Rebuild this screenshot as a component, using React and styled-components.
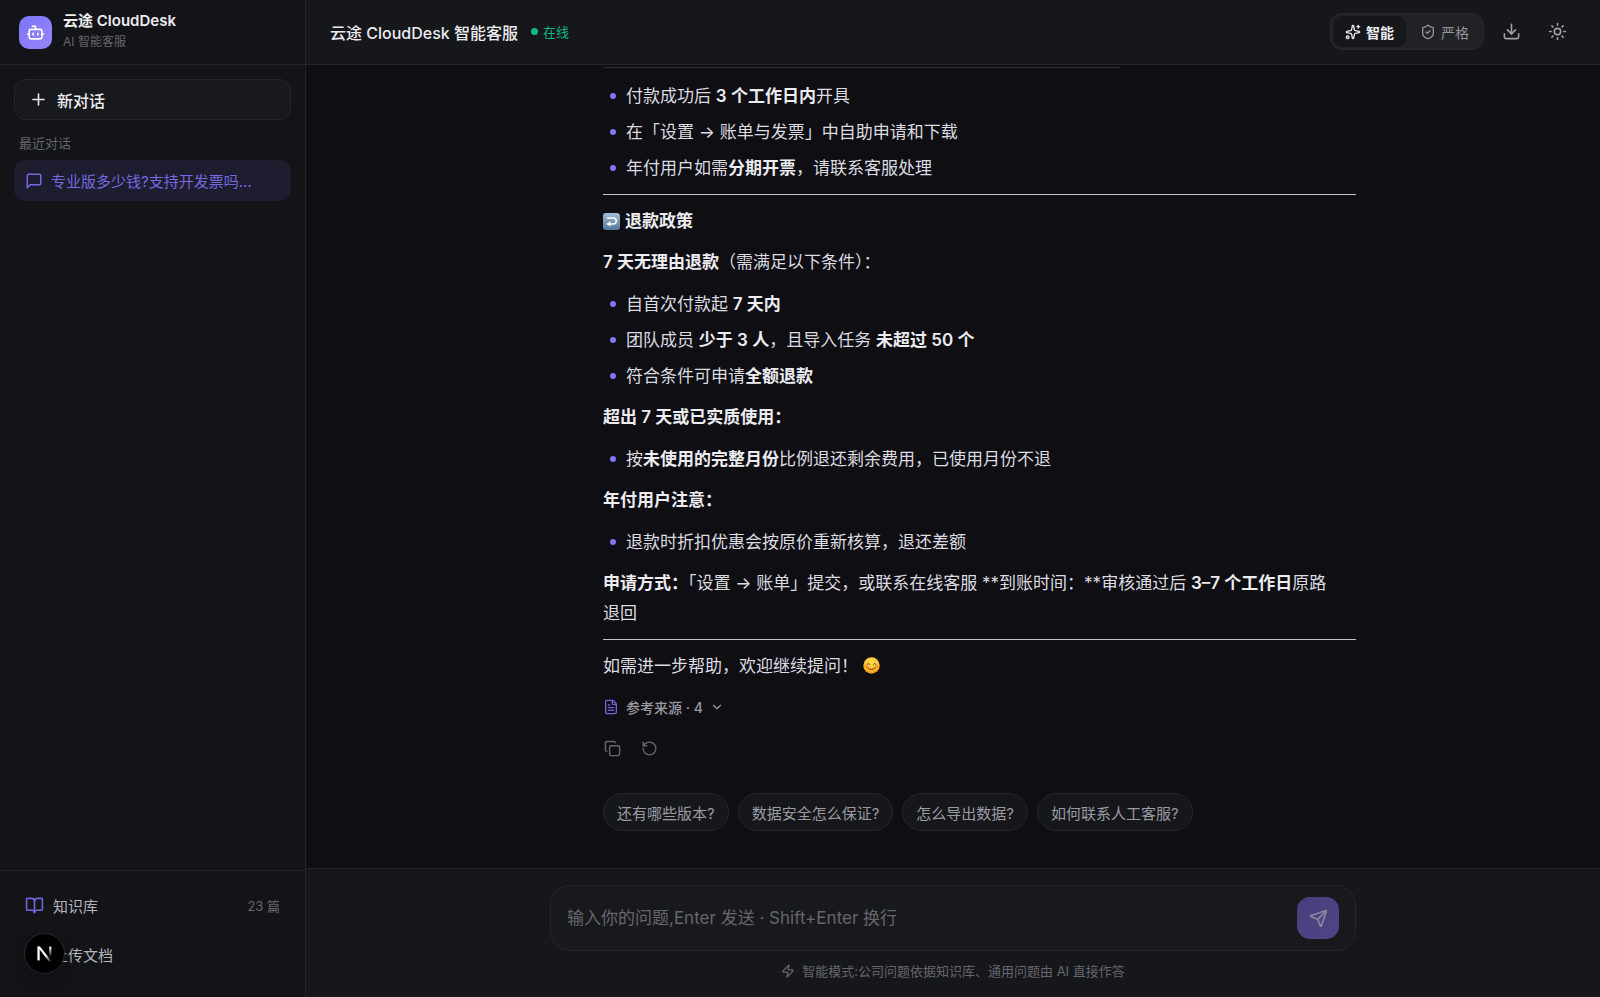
import { useState } from "react";
import styled, { createGlobalStyle } from "styled-components";
import {
    BookOpen, Bot, ChevronDown, Copy, Download, FileText, Plus,
    RotateCcw, Send, ShieldCheck, Sparkles, Sun, Upload, Zap,
} from "lucide-react";

const GlobalStyle = createGlobalStyle`
    * { box-sizing: border-box; }
    body {
        margin: 0;  background-color: #0e0e13;  color: #e4e4e8;
        font-family: Inter, "Noto Sans CJK SC", sans-serif;
        font-size: 16px;
    }
    button, textarea { font: inherit;  color: inherit; }
    button {
        padding: 0;  border: none;  background: none;  cursor: pointer;
        display: flex;  align-items: center;
    }
    svg { flex-shrink: 0; }
`

const Layout = styled.div`
    height: 100vh;
    display: grid;  grid-template-columns: 306px minmax(0, 1fr);
`

const Sidebar = styled.aside`
    display: flex;  flex-direction: column;  min-height: 0;
    background-color: #131418;
    border-right: 1px solid #24252a;
`

const Brand = styled.div`
    height: 65px;  padding: 0 19px;
    display: flex;  align-items: center;  column-gap: 11px;
    border-bottom: 1px solid #24252a;
`

const BrandText = styled.div`
    padding-bottom: 2px;
`

const Logo = styled.div`
    width: 33px;  height: 33px;  border-radius: 10px;
    display: flex;  align-items: center;  justify-content: center;
    background: linear-gradient(135deg, #7c74f8, #9686fb);
    color: #fff;
`

const BrandName = styled.div`
    font-size: 15px;  font-weight: 600;  line-height: 22px;  color: #ececf1;
`

const BrandSub = styled.div`
    font-size: 12px;  line-height: 20px;  color: #65666f;
`

const SidebarBody = styled.div`
    flex: 1;  padding: 14px;
    display: flex;  flex-direction: column;
`

const NewChat = styled.button`
    height: 41px;  padding: 0 14px;  column-gap: 9px;
    border: 1px solid #26272c;  border-radius: 12px;
    background-color: #18191d;
    font-weight: 500;  color: #ececf1;
`

const GroupLabel = styled.h2`
    margin: 13px 5px 7px;
    font-size: 13px;  font-weight: 400;  line-height: 20px;  color: #65666f;
`

const ChatItem = styled.button`
    height: 41px;  padding: 0 11px;  column-gap: 8px;
    border-radius: 12px;
    background-color: #1e1d2f;  color: #7669e0;
    font-size: 15px;
`

const SidebarFooter = styled.div`
    height: 127px;  padding: 13px 14px 18px;
    display: flex;  flex-direction: column;  row-gap: 6px;
    border-top: 1px solid #24252a;
`

const FooterItem = styled.button`
    height: 43px;  padding: 0 11px;  column-gap: 9px;
    font-size: 15px;  color: #b4b4bc;
    svg { color: #7265dc; }
`

const Count = styled.span`
    margin-left: auto;
    font-size: 13px;  color: #65666f;
`

const DevBadge = styled.button`
    position: fixed;  left: 24px;  bottom: 23px;
    width: 41px;  height: 41px;  border-radius: 50%;
    justify-content: center;
    background-color: #000;  border: 1px solid #2a2a2c;
    box-shadow: 0 8px 16px rgba(0,0,0,0.16);
`

const Main = styled.main`
    display: flex;  flex-direction: column;  min-height: 0;
`

const Header = styled.header`
    height: 65px;  padding: 0 24px 1px;  flex-shrink: 0;
    display: flex;  align-items: center;
    background-color: #16171b;
    border-bottom: 1px solid #24252a;
`

const Title = styled.h1`
    margin: 0;
    font-size: 16px;  font-weight: 500;  color: #ececf1;
`

const Status = styled.span`
    margin-left: 13px;
    display: flex;  align-items: center;  column-gap: 5px;
    font-size: 13px;  color: #10b981;
    &::before {
        content: "";  width: 7px;  height: 7px;
        border-radius: 50%;  background-color: #10b981;
    }
`

const Tools = styled.div`
    margin-left: auto;
    display: flex;  align-items: center;  column-gap: 9px;
`

const ModeSwitch = styled.div`
    padding: 2px;
    display: flex;  column-gap: 2px;
    border: 1px solid #28292d;  border-radius: 12px;
    background-color: #212226;
`

const ModeButton = styled.button`
    height: 31px;  padding: 0 12px;  column-gap: 5px;
    border-radius: 9px;
    font-size: 14px;  font-weight: ${props => props.$active ? 600 : 400};
    background-color: ${props => props.$active ? "#16171b" : "transparent"};
    color: ${props => props.$active ? "#ececf1" : "#93949c"};
`

const IconButton = styled.button`
    width: ${props => props.$size};  height: ${props => props.$size};
    justify-content: center;
    color: ${props => props.$color};
`

/* column-reverse keeps the newest message in view */
const Scroller = styled.div`
    flex: 1;  min-height: 0;  overflow-y: auto;  scrollbar-width: none;
    padding: 0 24px 37px;
    display: flex;  flex-direction: column-reverse;
`

const Thread = styled.div`
    width: 100%;  max-width: 806px;  margin: 0 auto;
    padding-left: 53px;
`

const Answer = styled.article`
    font-size: 17px;  line-height: 30px;  color: #dcdce1;

    p { margin: 11px 0; }
    h3 {
        margin: 11px 0;
        display: flex;  align-items: center;  column-gap: 5px;
        font-size: 17px;  font-weight: 600;  color: #ececf1;
    }
    strong { font-weight: 600;  color: #ececf1; }
    ul { margin: 12px 0 11px;  padding-left: 23px;  list-style: none; }
    li + li { margin-top: 6px; }
    li::before {
        content: "";  display: inline-block;
        width: 6px;  height: 6px;  border-radius: 50%;
        margin: 0 10px 0 -16px;  vertical-align: 3px;
        background-color: #8078f5;
    }
    hr { margin: 11px 0;  border: none;  border-top: 1px solid #c2c2c6; }
`

const TableEnd = styled.div`
    width: 517px;  height: 20px;  max-width: 100%;  margin-bottom: 13px;
    border-bottom: 1px solid #2c2d31;
`

const Emoji = styled.svg`
    width: 17px;  height: 17px;  vertical-align: -2px;
`

const Sources = styled.button`
    height: 30px;  column-gap: 7px;
    font-size: 14px;  font-weight: 500;  color: #9a9ba3;
`

const Actions = styled.div`
    margin-top: 17px;
    display: flex;  column-gap: 19px;
`

const Suggestions = styled.div`
    margin-top: 36px;
    display: flex;  flex-wrap: wrap;  gap: 9px;
`

const Chip = styled.button`
    height: 38px;  padding: 0 13px;
    border: 1px solid #26272c;  border-radius: 19px;
    background-color: #16171b;
    font-size: 15px;  color: #9a9ba3;
`

const Composer = styled.form`
    flex-shrink: 0;  padding: 16px 24px;
    background-color: #16171b;
    border-top: 1px solid #24252a;
`

const InputBox = styled.div`
    max-width: 806px;  margin: 0 auto;  padding: 11px 16px;
    display: flex;  align-items: center;  column-gap: 12px;
    border: 1px solid #26272c;  border-radius: 20px;
    background-color: #18191d;
`

const Input = styled.textarea`
    flex: 1;  height: 26px;  padding: 0;
    border: none;  outline: none;  resize: none;  background: none;
    font-size: 17px;  line-height: 26px;
    &::placeholder { color: #65666f;  opacity: 1; }
`

const SendButton = styled.button`
    width: 42px;  height: 42px;  border-radius: 13px;
    justify-content: center;
    background: linear-gradient(135deg, #473f7d, #4e4585);
    color: #8b8a9c;
`

const Hint = styled.p`
    margin: 10px 0 0;
    display: flex;  align-items: center;  justify-content: center;  column-gap: 7px;
    font-size: 13px;  line-height: 20px;  color: #65666f;
`

function ReturnEmoji() {
    return (
        <Emoji viewBox="0 0 17 17" role="img" aria-label="↩️">
            <defs>
                <linearGradient id="tile" x1="0" y1="0" x2="0" y2="1">
                    <stop offset="0" stopColor="#9fbdd6" />
                    <stop offset="1" stopColor="#55799a" />
                </linearGradient>
            </defs>
            <rect width="17" height="17" rx="3" fill="url(#tile)" />
            <path d="M4.5 5h5.8a2.8 2.8 0 0 1 0 5.9H6.5" fill="none" stroke="#fff" strokeWidth="1.5" strokeLinecap="round" />
            <path d="M7.4 8.2v5.4L3.3 10.9z" fill="#fff" />
        </Emoji>
    )
}

function SmileEmoji() {
    return (
        <Emoji viewBox="0 0 17 17" role="img" aria-label="😊">
            <defs>
                <radialGradient id="face" cx="0.5" cy="0.3" r="0.7">
                    <stop offset="0" stopColor="#ffe251" />
                    <stop offset="0.7" stopColor="#fdb92b" />
                    <stop offset="1" stopColor="#ef8d1b" />
                </radialGradient>
            </defs>
            <circle cx="8.5" cy="8.5" r="8.2" fill="url(#face)" />
            <circle cx="3.6" cy="9.6" r="1.8" fill="#f5752f" opacity="0.5" />
            <circle cx="13.4" cy="9.6" r="1.8" fill="#f5752f" opacity="0.5" />
            <path d="M4.2 7.4q1.3-2.6 2.6 0M10.2 7.4q1.3-2.6 2.6 0M4.9 10.9q3.6 3.4 7.2 0" fill="none" stroke="#6b3a10" strokeWidth="1" strokeLinecap="round" />
        </Emoji>
    )
}

function MessageIcon() {
    return (
        <svg width="18" height="18" viewBox="0 0 24 24" fill="none" stroke="currentColor" strokeWidth="2" strokeLinecap="round" strokeLinejoin="round">
            <path d="M21 15a2 2 0 0 1-2 2H7l-4 4V5a2 2 0 0 1 2-2h14a2 2 0 0 1 2 2z" />
        </svg>
    )
}

function NextMark() {
    return (
        <svg width="41" height="41" viewBox="0 0 41 41" fill="none">
            <defs>
                <linearGradient id="stem" x1="0" y1="14" x2="0" y2="24" gradientUnits="userSpaceOnUse">
                    <stop stopColor="#fff" />
                    <stop offset="1" stopColor="#fff" stopOpacity="0" />
                </linearGradient>
                <linearGradient id="leg" x1="22" y1="22" x2="27" y2="29" gradientUnits="userSpaceOnUse">
                    <stop stopColor="#fff" />
                    <stop offset="1" stopColor="#fff" stopOpacity="0" />
                </linearGradient>
            </defs>
            <path d="M13.4 13.6h2.6L27.6 28.2l-2 1.2z" fill="url(#leg)" />
            <path d="M13.4 13.6h2.3v13.8h-2.3z" fill="#fff" />
            <path d="M25.2 13.6h2.2V25h-2.2z" fill="url(#stem)" />
        </svg>
    )
}

const suggestions = ["还有哪些版本?", "数据安全怎么保证?", "怎么导出数据?", "如何联系人工客服?"]

function SidebarComponent() {
    return (
        <Sidebar>
            <Brand>
                <Logo><Bot size={19} /></Logo>
                <BrandText>
                    <BrandName>云途 CloudDesk</BrandName>
                    <BrandSub>AI 智能客服</BrandSub>
                </BrandText>
            </Brand>
            <SidebarBody>
                <NewChat type="button"><Plus size={19} />新对话</NewChat>
                <GroupLabel>最近对话</GroupLabel>
                <ChatItem type="button"><MessageIcon />专业版多少钱?支持开发票吗…</ChatItem>
            </SidebarBody>
            <SidebarFooter>
                <FooterItem type="button"><BookOpen size={19} />知识库<Count>23 篇</Count></FooterItem>
                <FooterItem type="button"><Upload size={19} />上传文档</FooterItem>
            </SidebarFooter>
        </Sidebar>
    )
}

function HeaderComponent({ mode, setMode }) {
    return (
        <Header>
            <Title>云途 CloudDesk 智能客服</Title>
            <Status>在线</Status>
            <Tools>
                <ModeSwitch>
                    <ModeButton type="button" $active={mode == "smart"} onClick={() => setMode("smart")}>
                        <Sparkles size={16} />智能
                    </ModeButton>
                    <ModeButton type="button" $active={mode == "strict"} onClick={() => setMode("strict")}>
                        <ShieldCheck size={16} />严格
                    </ModeButton>
                </ModeSwitch>
                <IconButton type="button" aria-label="导出" $size="37px" $color="#a0a1a9"><Download size={19} /></IconButton>
                <IconButton type="button" aria-label="主题" $size="37px" $color="#a0a1a9"><Sun size={19} /></IconButton>
            </Tools>
        </Header>
    )
}

function AnswerComponent() {
    return (
        <Answer>
            <TableEnd />
            <ul>
                <li>付款成功后 <strong>3 个工作日内</strong>开具</li>
                <li>在「设置 → 账单与发票」中自助申请和下载</li>
                <li>年付用户如需<strong>分期开票</strong>，请联系客服处理</li>
            </ul>
            <hr />
            <h3><ReturnEmoji />退款政策</h3>
            <p><strong>7 天无理由退款</strong>（需满足以下条件）：</p>
            <ul>
                <li>自首次付款起 <strong>7 天内</strong></li>
                <li>团队成员 <strong>少于 3 人</strong>，且导入任务 <strong>未超过 50 个</strong></li>
                <li>符合条件可申请<strong>全额退款</strong></li>
            </ul>
            <p><strong>超出 7 天或已实质使用：</strong></p>
            <ul>
                <li>按<strong>未使用的完整月份</strong>比例退还剩余费用，已使用月份不退</li>
            </ul>
            <p><strong>年付用户注意：</strong></p>
            <ul>
                <li>退款时折扣优惠会按原价重新核算，退还差额</li>
            </ul>
            <p>
                <strong>申请方式：</strong>「设置 → 账单」提交，或联系在线客服 **到账时间：**审核通过后 <strong>3–7 个工作日</strong>原路<br />退回
            </p>
            <hr />
            <p>如需进一步帮助，欢迎继续提问！ <SmileEmoji /></p>
        </Answer>
    )
}

function App() {
    const [mode, setMode] = useState("smart")
    const [text, setText] = useState("")

    return (
        <Layout>
            <GlobalStyle />
            <SidebarComponent />
            <Main>
                <HeaderComponent mode={mode} setMode={setMode} />
                <Scroller>
                    <Thread>
                        <AnswerComponent />
                        <Sources type="button">
                            <FileText size={16} color="#7265dc" />参考来源 · 4<ChevronDown size={14} />
                        </Sources>
                        <Actions>
                            <IconButton type="button" aria-label="复制" $size="18px" $color="#65666f"><Copy size={17} /></IconButton>
                            <IconButton type="button" aria-label="重新生成" $size="18px" $color="#65666f"><RotateCcw size={17} /></IconButton>
                        </Actions>
                        <Suggestions>
                            {suggestions.map(item => <Chip type="button" key={item} onClick={() => setText(item)}>{item}</Chip>)}
                        </Suggestions>
                    </Thread>
                </Scroller>
                <Composer onSubmit={e => e.preventDefault()}>
                    <InputBox>
                        <Input
                            rows={1} aria-label="输入你的问题" value={text}
                            onChange={e => setText(e.target.value)}
                            placeholder="输入你的问题,Enter 发送 · Shift+Enter 换行"
                        />
                        <SendButton type="submit" aria-label="发送"><Send size={19} /></SendButton>
                    </InputBox>
                    <Hint><Zap size={14} />智能模式:公司问题依据知识库、通用问题由 AI 直接作答</Hint>
                </Composer>
            </Main>
            <DevBadge type="button" aria-label="Next.js"><NextMark /></DevBadge>
        </Layout>
    )
}


export default App
